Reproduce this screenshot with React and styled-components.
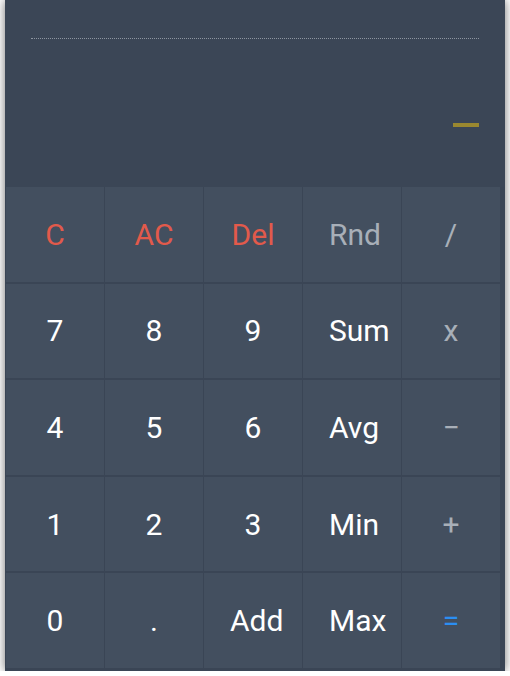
import styled, { createGlobalStyle } from 'styled-components';

const GlobalStyle = createGlobalStyle`
  body {
    margin: 0;
    background: #ffffff;
    font-family: Roboto, "Liberation Sans", sans-serif;
  }
`;

const Calculator = styled.div`
  box-sizing: border-box;
  width: 500px;
  height: 671px;
  margin-left: 5px;
  padding: 0 5px 3px 1px;
  background-color: #3a4555;
  box-shadow: 0 0 10px rgba(0, 0, 0, 0.55);
  display: flex;
  flex-direction: column;
`;

const Display = styled.div`
  height: 187.5px;
  padding: 0 21px 0 26px;
  box-sizing: border-box;
  display: flex;
  flex-direction: column;
  background-color: #3b4656;
  margin-left: -1px;
  margin-right: -5px;
  padding-right: 26px;
`;

const History = styled.div`
  margin-top: 38px;
  border-top: 1px dotted #8d95a0;
`;

const Screen = styled.div`
  flex: 1;
  display: flex;
  justify-content: flex-end;
  align-items: flex-start;
  padding-top: 84px;
`;

const Cursor = styled.span`
  display: block;
  width: 26px;
  height: 4px;
  background-color: #9a8830;
`;

const Keys = styled.div`
  display: grid;
  grid-template-columns: repeat(5, 98px);
  grid-auto-rows: 94.6px;
  column-gap: 1px;
  row-gap: 2px;
`;

const colors = {
  danger: '#e25a4b',
  muted: '#a8afb8',
  accent: '#2b8ef2',
  plain: '#ffffff',
};

const Key = styled.button`
  box-sizing: border-box;
  padding: 0 26px;
  border: 0;
  background-color: #434f5f;
  color: ${(p) => colors[p.$tone || 'plain']};
  font-family: Roboto, "Liberation Sans", sans-serif;
  font-size: 30px;
  font-weight: 400;
  text-align: center;
  white-space: nowrap;
  overflow: visible;
  cursor: pointer;
`;

const Label = styled.span`
  display: block;
  text-align: center;
`;

const keys = [
  ['C', 'danger'], ['AC', 'danger'], ['Del', 'danger'], ['Rnd', 'muted'], ['/', 'muted'],
  ['7'], ['8'], ['9'], ['Sum'], ['x', 'muted'],
  ['4'], ['5'], ['6'], ['Avg'], ['−', 'muted'],
  ['1'], ['2'], ['3'], ['Min'], ['+', 'muted'],
  ['0'], ['.'], ['Add'], ['Max'], ['=', 'accent'],
];

export default function App() {
  return (
    <>
      <GlobalStyle />
      <Calculator>
        <Display>
          <History />
          <Screen>
            <Cursor />
          </Screen>
        </Display>
        <Keys>
          {keys.map(([label, tone]) => (
            <Key key={label} $tone={tone}>
              <Label>{label}</Label>
            </Key>
          ))}
        </Keys>
      </Calculator>
    </>
  );
}
